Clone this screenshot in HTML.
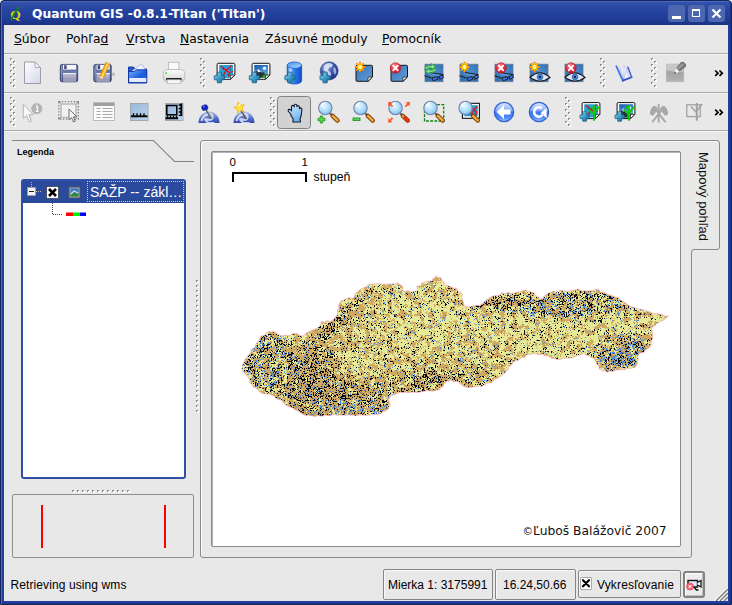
<!DOCTYPE html>
<html><head><meta charset="utf-8"><title>Quantum GIS</title>
<style>
html,body{margin:0;padding:0;}
body{width:732px;height:605px;overflow:hidden;background:#fff;position:relative;font-family:"DejaVu Sans","Liberation Sans",sans-serif;}
.abs,.a{position:absolute;}
#win{position:absolute;left:0;top:0;width:732px;height:605px;background:#223f9c;border-radius:4px 4px 0 0;box-sizing:border-box;border:1px solid #142560;box-shadow:inset 1px 1px 0 #4a66ba, inset -1px -1px 0 #1a3284;}
#client{position:absolute;left:4px;top:25px;width:724px;height:576px;background:#e8e8e8;}
#title{position:absolute;left:32px;top:7px;font:bold 12.3px "DejaVu Sans","Liberation Sans",sans-serif;color:#fff;white-space:nowrap;}
.menu{position:absolute;top:32px;font:12.3px "DejaVu Sans","Liberation Sans",sans-serif;color:#000;white-space:nowrap;}
.hl{position:absolute;left:4px;width:724px;height:1px;}
.ar{font-family:"Liberation Sans",sans-serif;white-space:nowrap;color:#000;}
.wb{position:absolute;top:5px;width:17px;height:17px;background:#4c67b0;border-radius:3px;}
.sbox{position:absolute;top:569px;height:31px;border:1px solid #858585;border-radius:2px;box-sizing:border-box;box-shadow:inset 1px 1px 0 #f8f8f8;}
.grip{position:absolute;width:3px;background-image:repeating-linear-gradient(#f8f8f8 0 1px,#a8a8a8 1px 2px,transparent 2px 4px);}
</style></head><body>
<div id="win"></div>
<div class="a" style="left:2px;top:2px;width:728px;height:23px;background:linear-gradient(#3453ab 0%,#26449f 35%,#213d98 70%,#1a3286 100%);"></div>
<div id="client"></div>
<!-- title bar -->
<svg class="a" style="left:8px;top:3px" width="16" height="20"><text x="2.200" y="16.300" font-family="Liberation Serif,serif" font-weight="bold" font-size="13.500" fill="#d8d410">Q</text><path d="M3 16.500L10.500 4.500" stroke="#108018" stroke-width="1.800"/><path d="M12 2.500l-0.300 4.500-3.200-2zM2.300 16.300l3-1 -1.500 2.500z" fill="#108018"/></svg>
<div id="title">Quantum GIS -0.8.1-Titan ('Titan')</div>
<div class="wb" style="left:668px"><div class="a" style="left:4px;top:11px;width:9px;height:2.500px;background:#fff"></div></div>
<div class="wb" style="left:688px"><div class="a" style="left:4px;top:3.500px;width:6px;height:5.500px;border:1.500px solid #fff;border-top-width:2.500px"></div></div>
<div class="wb" style="left:708px"><svg class="a" style="left:0;top:0" width="17" height="17"><path d="M4.5 4.5l8 8M12.5 4.5l-8 8" stroke="#fff" stroke-width="2.2"/></svg></div>
<!-- menu -->
<div class="menu" style="left:14px"><u>S</u>úbor</div>
<div class="menu" style="left:66px">Pohľa<u>d</u></div>
<div class="menu" style="left:126px"><u>V</u>rstva</div>
<div class="menu" style="left:180px"><u>N</u>astavenia</div>
<div class="menu" style="left:265px">Zásuvné <u>m</u>oduly</div>
<div class="menu" style="left:382px"><u>P</u>omocník</div>
<div class="hl" style="top:53px;background:#aaaaaa"></div>
<div class="hl" style="top:54px;background:#f6f6f6"></div>
<div class="hl" style="top:92px;background:#aaaaaa"></div>
<div class="hl" style="top:93px;background:#f6f6f6"></div>
<div class="hl" style="top:130px;background:#aaaaaa"></div>
<div class="hl" style="top:131px;background:#f6f6f6"></div>
<!-- TOOLBARS -->
<!--TB--><svg class="a" style="left:0;top:53px" width="732" height="80" viewBox="0 53 732 80">
<defs>
<linearGradient id="gPage" x1="0" y1="0" x2="1" y2="1"><stop offset="0" stop-color="#ffffff"/><stop offset="1" stop-color="#d4d8ea"/></linearGradient>
<linearGradient id="gFlop" x1="0" y1="0" x2="0" y2="1"><stop offset="0" stop-color="#4c5a94"/><stop offset="0.450" stop-color="#6c7cac"/><stop offset="1" stop-color="#2c3666"/></linearGradient>
<linearGradient id="gFold" x1="0" y1="0" x2="1" y2="1"><stop offset="0" stop-color="#78b8fc"/><stop offset="0.550" stop-color="#1c5cdc"/><stop offset="1" stop-color="#2c6ce4"/></linearGradient>
<linearGradient id="gPlus" x1="0" y1="0" x2="1" y2="1"><stop offset="0" stop-color="#a4dcf4"/><stop offset="0.500" stop-color="#3c9cc8"/><stop offset="1" stop-color="#146894"/></linearGradient>
<linearGradient id="gCyl" x1="0" y1="0" x2="1" y2="0"><stop offset="0" stop-color="#2470e4"/><stop offset="0.220" stop-color="#c4e4ff"/><stop offset="0.450" stop-color="#2c80ec"/><stop offset="1" stop-color="#0c50c8"/></linearGradient>
<radialGradient id="gGlobe" cx="0.35" cy="0.3" r="0.75"><stop offset="0" stop-color="#a8bce8"/><stop offset="0.450" stop-color="#4060b4"/><stop offset="1" stop-color="#1c2c84"/></radialGradient>
<radialGradient id="gSq" cx="0.55" cy="0.45" r="0.7"><stop offset="0" stop-color="#4c90d0"/><stop offset="1" stop-color="#2c6cb0"/></radialGradient>
<radialGradient id="gRed" cx="0.4" cy="0.3" r="0.8"><stop offset="0" stop-color="#ff9a9a"/><stop offset="0.5" stop-color="#e83040"/><stop offset="1" stop-color="#b01020"/></radialGradient>
<radialGradient id="gLens" cx="0.4" cy="0.35" r="0.7"><stop offset="0" stop-color="#ecf8ff"/><stop offset="0.600" stop-color="#a8dcf8"/><stop offset="1" stop-color="#7cc0ec"/></radialGradient>
<linearGradient id="gBtn" x1="0" y1="0" x2="0" y2="1"><stop offset="0" stop-color="#e0eaff"/><stop offset="0.420" stop-color="#86acf8"/><stop offset="0.500" stop-color="#3c74f4"/><stop offset="0.780" stop-color="#4c88fa"/><stop offset="1" stop-color="#a4c8ff"/></linearGradient>
<linearGradient id="gGrey" x1="0" y1="0" x2="0" y2="1"><stop offset="0" stop-color="#c4c4c4"/><stop offset="0.5" stop-color="#a4a4a4"/><stop offset="1" stop-color="#b4b4b4"/></linearGradient>
<linearGradient id="gMeas" x1="0" y1="0" x2="1" y2="1"><stop offset="0" stop-color="#98b8dc"/><stop offset="1" stop-color="#bcd4ec"/></linearGradient>
<linearGradient id="gDome" x1="0" y1="0" x2="0" y2="1"><stop offset="0" stop-color="#b4c4ec"/><stop offset="0.600" stop-color="#5470c8"/><stop offset="1" stop-color="#3448a8"/></linearGradient>
<linearGradient id="gHandle" x1="0" y1="0" x2="1" y2="0"><stop offset="0" stop-color="#f8c060"/><stop offset="1" stop-color="#b86c10"/></linearGradient>
<linearGradient id="gHand" x1="0" y1="0" x2="0.300" y2="1"><stop offset="0" stop-color="#d4ecfc"/><stop offset="1" stop-color="#70b4ec"/></linearGradient>
<linearGradient id="gSky" x1="0" y1="0" x2="0.300" y2="1"><stop offset="0" stop-color="#1458b0"/><stop offset="1" stop-color="#6cb4f0"/></linearGradient>
<linearGradient id="gCylTop" x1="0" y1="0" x2="1" y2="1"><stop offset="0" stop-color="#4090f0"/><stop offset="1" stop-color="#b4dcff"/></linearGradient>
<linearGradient id="gBP" x1="0" y1="0" x2="1" y2="1"><stop offset="0" stop-color="#3874b8"/><stop offset="1" stop-color="#649cd8"/></linearGradient>
<g id="grip"><path d="M0 0h2v2h-2zM3 3h2v2h-2zM0 6h2v2h-2zM3 9h2v2h-2zM0 12h2v2h-2zM3 15h2v2h-2zM0 18h2v2h-2zM3 21h2v2h-2zM0 24h2v2h-2zM3 27h2v2h-2z" fill="#8c8c8c"/><path d="M1 1h2v2h-2zM4 4h2v2h-2zM1 7h2v2h-2zM4 10h2v2h-2zM1 13h2v2h-2zM4 16h2v2h-2zM1 19h2v2h-2zM4 22h2v2h-2zM1 25h2v2h-2zM4 28h2v2h-2z" fill="#ffffff"/></g>
<g id="plus"><path d="M3.400 0.500h3.400q0.500 0 0.500 0.500v2.900h2.400q0.500 0 0.500 0.500v3.200q0 0.500-0.500 0.500h-2.400v2.500q0 0.500-0.500 0.500h-3.400q-0.500 0-0.500-0.500v-2.500h-2.400q-0.500 0-0.500-0.500v-3.200q0-0.500 0.500-0.500h2.400v-2.900q0-0.500 0.500-0.500z" fill="url(#gPlus)" stroke="#185c84" stroke-width="0.800"/></g>
<g id="star"><path d="M-5.20 -0.00L5.20 0.00M-3.68 -3.68L3.68 3.68M-0.00 -5.20L0.00 5.20M3.68 -3.68L-3.68 3.68" stroke="#ff8800" stroke-width="1.900"/><path d="M-3.80 -0.00L3.80 0.00M-2.69 -2.69L2.69 2.69M-0.00 -3.80L0.00 3.80M2.69 -2.69L-2.69 2.69" stroke="#ffd400" stroke-width="1.200"/><circle r="1.900" fill="#fff4a0"/></g>
<g id="redx"><circle r="5.300" fill="url(#gRed)" stroke="#b02030" stroke-width="0.6"/><path d="M-2.300 -2.300l4.600 4.600M2.300 -2.300l-4.600 4.600" stroke="#fff" stroke-width="1.800" stroke-linecap="round"/></g>
<g id="pagev"><path d="M0 0h18v12.500l-3.500 3.500h-14.500z" fill="#fff" stroke="#111" stroke-width="1.100"/><path d="M18 12.500h-3.500v3.500z" fill="#ddd" stroke="#111" stroke-width="0.700"/></g>
<g id="lens"><path d="M4 4.500l4 4" stroke="#5a5a6a" stroke-width="2"/><path d="M7.300 7.800l5 4.800" stroke="#7a4810" stroke-width="4.400" stroke-linecap="round"/><path d="M7.600 8.100l4.500 4.300" stroke="#f0a840" stroke-width="2.500" stroke-linecap="round"/><circle r="6.700" fill="url(#gLens)" stroke="#7882b0" stroke-width="1.100"/><path d="M-4.200 -1.300a4.500 4.500 0 0 1 3.700 -3.700" stroke="#fff" stroke-width="1.400" fill="none" opacity="0.950"/></g>
<g id="sqglass"><rect x="0" y="0" width="18" height="17.500" fill="url(#gSq)" stroke="#6c7c98" stroke-width="0.800"/><path d="M4.500 8.500l13.500 2v1.500l-13.500-2z" fill="#6ca4e0" opacity="0.800"/><path d="M-0.500 11.500l7 2.300M5 8.300l13.500 2.200M12.300 13.300l1.900-0.600" stroke="#181818" stroke-width="1" fill="none"/><path d="M7 13.700l5-1.200 0.700 2.600-4.500 1.500zM14 12.200l3.800-1.500 0.600 2.700-3.600 1.700z" fill="#4070f8" stroke="#181818" stroke-width="0.900"/></g>
<g id="sqeye"><rect x="0" y="0" width="18" height="17.500" fill="url(#gSq)" stroke="#6c7c98" stroke-width="0.800"/><path d="M0 13q10 -9 20 0.300q-10 7.500 -20 -0.300z" fill="#dce6f4" stroke="#1c1c24" stroke-width="1.200"/><circle cx="10" cy="12.700" r="2.900" fill="#4c88d8" stroke="#2c58a8" stroke-width="0.700"/><circle cx="10" cy="12.700" r="1.100" fill="#10183c"/></g>
<g id="star5"><path d="M-1.43 -5.62L1.00 -2.51L4.90 -3.10L2.69 0.17L4.46 3.70L0.67 2.62L-2.14 5.39L-2.28 1.44L-5.79 -0.37L-2.08 -1.72z" fill="#ffe23c" stroke="#f0b428" stroke-width="0.800" stroke-linejoin="round"/><path d="M-2 -1.500l2-2.500 1 2z" fill="#fff8c0"/></g>
<g id="chev"><path d="M0.500 0l2.800 2.700-2.800 2.700M4.800 0l2.800 2.700-2.800 2.700" stroke="#000" stroke-width="1.700" fill="none"/></g>
</defs>
<!-- ===== toolbar 1 ===== -->
<use href="#grip" x="10" y="58"/>
<use href="#grip" x="200" y="58"/>
<use href="#grip" x="600" y="58"/>
<use href="#grip" x="651" y="58"/>
<!-- new -->
<path d="M24.500 62h10.500l5.500 5.500v16h-16z" fill="url(#gPage)" stroke="#9c9cac" stroke-width="1"/><path d="M35 62v5.500h5.500z" fill="#f4f4f8" stroke="#9c9cac" stroke-width="0.800"/>
<!-- save -->
<g id="flop"><rect x="60.300" y="64.400" width="17.400" height="17.400" rx="1.800" fill="url(#gFlop)" stroke="#283060" stroke-width="0.800"/><rect x="61" y="65" width="1.200" height="16" fill="#98a4cc" opacity="0.700"/><rect x="63" y="64.800" width="13.200" height="4.800" fill="#f4f4fa"/><rect x="64.200" y="65.200" width="2.400" height="3.800" fill="#3c4878"/><rect x="63" y="73" width="13.200" height="8.600" fill="#b0b0cc"/><rect x="63" y="73" width="13.200" height="1.200" fill="#ececf6"/><rect x="63" y="77.500" width="13.200" height="4" fill="#9c9cbc"/></g>
<use href="#flop" x="33.500" y="0"/>
<path d="M105.800 62.300l4 1.500-6 13.700-4-1.500z" fill="#f8a818" stroke="#d08008" stroke-width="0.500"/><path d="M99.800 76l4 1.500-3.600 2.400z" fill="#f4d8a8"/><path d="M107.300 62.900l1.500 0.600-6 13.700-1.500-0.600z" fill="#ffd868"/><path d="M100.600 78.600l0.900 0.400-1.300 0.900z" fill="#806040"/>
<rect x="112" y="72.500" width="3" height="3.500" fill="#c0c0c4" rx="1"/>
<!-- open -->
<path d="M128.500 67h5l1.500 2h11.500v13.800h-18z" fill="#2458d0" stroke="#1030a0" stroke-width="0.900"/>
<path d="M130.500 72l11-8 3.800 5.500v5h-14.800z" fill="#f0f2fc" stroke="#98a4cc" stroke-width="0.600"/>
<path d="M128.500 82.800v-11.300h5.500l2-1.700h10.800v13z" fill="url(#gFold)" stroke="#1030a0" stroke-width="0.900"/>
<path d="M129.300 78h17v4h-17z" fill="#e8ecfc"/>
<!-- print -->
<defs><linearGradient id="gPrn" x1="0" y1="0" x2="0" y2="1"><stop offset="0" stop-color="#fbfbfb"/><stop offset="0.600" stop-color="#e4e4e4"/><stop offset="1" stop-color="#c4c4c4"/></linearGradient></defs>
<rect x="168.500" y="62.300" width="10.300" height="8" fill="#fafafa" stroke="#b4b4b4" stroke-width="0.800"/>
<rect x="163.300" y="69.500" width="21.500" height="12.500" rx="4.200" fill="url(#gPrn)" stroke="#b0b0b0" stroke-width="0.800"/>
<rect x="166" y="78" width="15.700" height="2" rx="0.800" fill="#202020"/>
<rect x="167.500" y="79.800" width="13" height="3.800" fill="#f6f6f6" stroke="#b8b8b8" stroke-width="0.700"/>
<circle cx="166.200" cy="73" r="0.900" fill="#50d050"/>
<!-- add vector -->
<g id="vecpage"><path d="M218.300 63.300h15.400q1.200 0 1.200 1.200v10.500l-4.200 4.300h-12.400q-1.200 0-1.200-1.200v-13.600q0-1.200 1.200-1.200z" fill="#fff" stroke="#111" stroke-width="1"/><path d="M219.200 65h13.800v9.300l-3.700 3.800h-10.100z" fill="#28a0d8"/><path d="M221 66l5 4.500 5.500-5M226 70.500l3.500 2-1 4M226 70.500l-2.500 4.500 0.500 2.500M229.500 72.500l3.500-1" stroke="#e01018" stroke-width="1.300" fill="none"/><path d="M223 68.500h1v1h-1zM230 69h1v1h-1zM227.500 74h1v1h-1z" fill="#103048"/><path d="M234.700 75l-4.200 0.200-0.100 4z" fill="#fff" stroke="#111" stroke-width="0.700"/></g>
<use href="#plus" x="214.300" y="71.700"/>
<!-- add raster -->
<g id="raspage"><path d="M253.300 63.300h15.400q1.200 0 1.200 1.200v10.500l-4.200 4.300h-12.400q-1.200 0-1.200-1.200v-13.600q0-1.200 1.200-1.200z" fill="#fff" stroke="#111" stroke-width="1"/><path d="M254.200 65h13.800v9.300l-3.700 3.800h-10.100z" fill="url(#gSky)"/><circle cx="264.500" cy="68.300" r="1.700" fill="#e8f4ff"/><path d="M254.200 78.100v-4l4.300-5 3.500 4 1.500-1 2.500 3-1.700 3z" fill="#283038"/><path d="M257 70.800l1.500-1.800 2.600 3-1.600-0.300-0.800 0.800z" fill="#fff"/><path d="M261 78.100l2.500-3.300 4.500-1v0.500l-3.700 3.800z" fill="#28a028"/><path d="M269.700 75l-4.200 0.200-0.100 4z" fill="#fff" stroke="#111" stroke-width="0.700"/></g>
<use href="#plus" x="249.300" y="71.700"/>
<!-- postgis -->
<path d="M287.200 65.200v15.600a7.200 3.200 0 0 0 14.400 0v-15.600z" fill="url(#gCyl)" stroke="#0c48c0" stroke-width="0.800"/><ellipse cx="294.400" cy="65.200" rx="7.200" ry="3.200" fill="url(#gCylTop)" stroke="#1458d0" stroke-width="0.800"/>
<use href="#plus" x="284.800" y="71.700"/>
<!-- wms globe -->
<circle cx="329.200" cy="70.800" r="9" fill="url(#gGlobe)" stroke="#283880" stroke-width="0.600"/><path d="M324 66q2-3 6-3l3 1.500-1 2.500-3 0.500-1 3 2.500 1.500 0.500 3.500-2 1-2.500-4-3-2z" fill="#e8eef8" opacity="0.800"/><path d="M333.500 67l2 1 1 4-1.500 3-1.500-3z" fill="#dfe6f4" opacity="0.650"/>
<use href="#plus" x="320" y="71.700"/>
<!-- new vector layer -->
<g id="bluepage"><path d="M357 65.300h14.500q1 0 1 1v10.700l-4.300 4.300h-11.200q-1 0-1-1v-14q0-1 1-1z" fill="url(#gBP)" stroke="#181818" stroke-width="1"/><path d="M372.300 77l-4.300 0.200-0.100 4z" fill="#f8f8f8" stroke="#181818" stroke-width="0.700"/></g>
<use href="#star" x="360" y="67"/>
<!-- remove layer -->
<use href="#bluepage" x="35" y="0"/><use href="#redx" x="395.500" y="68"/>
<!-- overview icons -->
<use href="#sqglass" x="425" y="64.200"/>
<path d="M424.500 69.500q0.500-4 5-4h2v-2l4 3.200-4 3.200v-2h-2q-2.500 0-2.800 1.600zM436.500 68.500q-0.500 4-5 4h-2v2l-4-3.200 4-3.200v2h2q2.500 0 2.800-1.600z" fill="#84e484" stroke="#2c9444" stroke-width="0.800"/>
<use href="#sqglass" x="460" y="64.200"/><use href="#star" x="464.500" y="67"/>
<use href="#sqglass" x="495" y="64.200"/><use href="#redx" x="501" y="68"/>
<use href="#sqeye" x="530" y="64.200"/><use href="#star" x="534.500" y="67"/>
<use href="#sqeye" x="565" y="64.200"/><use href="#redx" x="571" y="68"/>
<!-- help book -->
<path d="M617 67l3.500 1.500 3.700-3.800 3.500 2.800 3.700 9.700-8.400 3.200z" fill="#dcdcf6"/>
<path d="M621 70l3-4.500 2 3.500 1.500 8-4 2.500z" fill="#f6f6ff"/>
<path d="M624.200 65.500l-0.700 14M620.500 69l3 10.500M627.200 68l-3.500 11.500" stroke="#a4a8dc" stroke-width="0.600" fill="none"/>
<path d="M616.300 66.200l6.500 14.400" stroke="#4478e4" stroke-width="1.800" stroke-linecap="round"/>
<path d="M622.800 80.600l8.900-3.300" stroke="#2c50c4" stroke-width="1.700" stroke-linecap="round"/>
<path d="M627.900 67.300l3.800 10" stroke="#4468cc" stroke-width="1.500" stroke-linecap="round"/>
<!-- toggle edit (grey) -->
<rect x="666.200" y="64" width="17.600" height="17.800" fill="url(#gGrey)" stroke="#b8b8b8" stroke-width="0.600"/>
<path d="M666.500 64.300h17v7.500q-8 0.500-17-1.500z" fill="#cacaca" opacity="0.800"/>
<path d="M683.500 61.800l2.700 2.700-0.300 2.200-6.400 5-3.500-3.500 5-6.200z" fill="#787878"/><path d="M682.300 63.200l1.500 1.500-6 5.500-1.300-1.300z" fill="#9c9c9c"/>
<path d="M676 68.200l3.500 3.500-3.200 1.300-1.600-1.600z" fill="#f4f4f4"/><path d="M674.700 71.400l1.600 1.600-2.300 0.800z" fill="#606060"/>
<use href="#chev" x="714.700" y="70.500"/>
<!-- ===== toolbar 2 ===== -->
<use href="#grip" x="10" y="97"/>
<use href="#grip" x="270" y="97"/>
<use href="#grip" x="565" y="97"/>
<!-- identify -->
<path d="M23.300 104.300v14.200l3.300-3 2.700 6.500 2.300-1-2.700-6.300h4.300z" fill="#f8f8f8" stroke="#b4b4b4" stroke-width="1"/>
<circle cx="36.800" cy="108.600" r="5.200" fill="#b4b4b4" stroke="#a0a0a0" stroke-width="0.500"/><path d="M36.200 107.500h1.300v3.600M35.800 111.300h2.600" stroke="#fff" stroke-width="1.200" fill="none"/><circle cx="36.900" cy="105.800" r="0.900" fill="#fff"/>
<!-- select -->
<rect x="61" y="104" width="15" height="13.500" fill="#f2f2f2" stroke="#bcbcbc" stroke-width="1.600"/>
<rect x="58.800" y="101.600" width="19.500" height="17.500" fill="none" stroke="#808080" stroke-width="1.300" stroke-dasharray="1.300 1.700"/><path d="M58 101h2.500v2h-2.500zM76.500 101h2.500v2h-2.500zM58 117.500h2.500v2h-2.500z" fill="#909090"/>
<path d="M69 109v11l2.500-2.300 2 4.300 1.800-.8-2-4.300h3.500z" fill="#f4f4f4" stroke="#707070" stroke-width="1"/>
<!-- attribute table -->
<rect x="93.500" y="102.500" width="21" height="18" fill="#fcfcfc" stroke="#b4b4b4" stroke-width="0.900"/><rect x="94" y="103" width="20" height="3" fill="#a0a0a0"/>
<path d="M96.500 108.500h4M102.500 108.500h10M96.500 111.500h4M102.500 111.500h10M96.500 114.500h4M102.500 114.500h10M96.500 117.500h4M102.500 117.500h10" stroke="#a8a8a8" stroke-width="1.100"/>
<!-- measure line -->
<rect x="130.500" y="103.500" width="17.500" height="17" fill="url(#gMeas)" stroke="#9ca4ac" stroke-width="0.900"/>
<path d="M131 116.300h16.500" stroke="#000" stroke-width="1.900"/><path d="M133.500 116v-2.800M137 116v-2.800M140.500 116v-2.800M144 116v-2.800" stroke="#000" stroke-width="1.300"/>
<!-- measure area -->
<rect x="165.500" y="103.500" width="17.500" height="17" fill="url(#gMeas)" stroke="#9ca4ac" stroke-width="0.900"/>
<rect x="166.800" y="105.500" width="10" height="9.300" fill="none" stroke="#000" stroke-width="1.500"/>
<path d="M165.500 118.300h12.500M181.300 103.500v12.500" stroke="#000" stroke-width="1.900" fill="none"/><path d="M167.500 118v-2.300M170.500 118v-2.300M173.500 118v-2.300M176.500 118v-2.300M181 105h-2.300M181 108.500h-2.300M181 112h-2.300M181 115.300h-2.300" stroke="#000" stroke-width="1.300" fill="none"/>
<!-- bookmarks -->
<g id="dome"><path d="M198.500 123a10.500 11.500 0 0 1 21 0z" fill="url(#gDome)"/><path d="M201.500 121q1-5 6-6.500t5 2.500-5 2.500 1 3.500h6" stroke="#e8eefc" stroke-width="2.200" fill="none" opacity="0.800"/></g>
<path d="M206 109.500l5.500 9" stroke="#555" stroke-width="1.600"/><path d="M206.700 109.500l5.300 8.600" stroke="#ddd" stroke-width="0.600"/><rect x="201.800" y="105" width="6" height="5.200" rx="2" fill="#1424c4" stroke="#0c1470" stroke-width="0.500" transform="rotate(-15 204.800 107.600)"/><circle cx="203.800" cy="106.600" r="1" fill="#6c7cf0"/>
<use href="#dome" x="35" y="0"/>
<path d="M240.500 109.500l6 9.500" stroke="#444" stroke-width="1.600"/><path d="M241.200 109.500l5.800 9.100" stroke="#ddd" stroke-width="0.600"/><use href="#star5" x="239.500" y="107.800"/>
<!-- pan (pressed) -->
<rect x="277.500" y="96.500" width="33" height="32" rx="3" fill="#d2d2d2" stroke="#828282" stroke-width="1"/>
<path d="M291 114.500l-2.500-3q-1-2 .8-2.200 1.200 0 2.200 1.500v-4q.2-1.600 1.500-1.400 1.200.2 1.200 1.500v-1.500q.3-1.300 1.500-1.200 1.200.2 1.200 1.500v1q.4-1.200 1.500-1 1.200.3 1.100 1.500v1.500q.5-1 1.500-.7 1 .4.900 1.600l-.6 5.200q-.3 2-1.200 3.500l.3 3.700h-7.500l.3-3.200q-1.300-1.500-2.200-2.800z" fill="url(#gHand)" stroke="#101828" stroke-width="1.100" stroke-linejoin="round"/>
<!-- zoom in -->
<use href="#lens" x="325.300" y="108"/>
<path d="M320.300 116h2.400v2.300h2.300v2.400h-2.300v2.300h-2.400v-2.300h-2.300v-2.400h2.300z" fill="#58d858" stroke="#189018" stroke-width="0.800"/>
<!-- zoom out -->
<use href="#lens" x="360.500" y="108"/>
<rect x="353" y="118" width="7" height="2.600" fill="#58d858" stroke="#189018" stroke-width="0.800"/>
<!-- zoom full -->
<use href="#lens" x="395.500" y="108"/>
<path d="M405 117.500l3.300 3.200" stroke="#e83010" stroke-width="3.200" stroke-linecap="round"/>
<path d="M388.500 102v4l1.200-1.200 2.300 2.300 1-1-2.300-2.300 1.200-1.200zM409.500 102v4l-1.200-1.200-2.300 2.300-1-1 2.300-2.300-1.200-1.200zM388.500 122.500v-4l1.200 1.200 2.300-2.300 1 1-2.300 2.300 1.200 1.200z" fill="#ff5020" stroke="#ff5020" stroke-width="0.400"/>
<!-- zoom selection -->
<rect x="424.500" y="104.700" width="19.200" height="16.300" fill="none" stroke="#0c8010" stroke-width="1.300" stroke-dasharray="2.800 1.400"/>
<use href="#lens" x="430.500" y="108"/>
<!-- zoom layer -->
<rect x="462.400" y="103.300" width="17" height="15" fill="#fff" stroke="#111" stroke-width="1.100"/><rect x="464.300" y="105.200" width="13.400" height="11" fill="#2898d0"/><path d="M470 106l4 4 3.500-3.500M474 110l2.500 2-1 3.500M474 110l-2.500 4" stroke="#e01020" stroke-width="1.400" fill="none"/>
<use href="#lens" x="465.600" y="108" transform="translate(0 0)"/>
<!-- zoom last -->
<circle cx="504" cy="112" r="9.600" fill="url(#gBtn)" stroke="#3464d4" stroke-width="1.400"/><path d="M496.500 112l7.500-7v4.500h6.500v5h-6.500v4.500z" fill="#fff"/>
<!-- refresh -->
<circle cx="539" cy="112" r="9.600" fill="url(#gBtn)" stroke="#3464d4" stroke-width="1.400"/><path d="M541.8 108.4A4.7 4.7 0 1 0 542.4 115.0" stroke="#fff" stroke-width="2.600" fill="none"/><path d="M540.500 113l6-5 0.300 10.300z" fill="#fff"/>
<!-- grass vector -->
<g transform="translate(365 39.300)"><use href="#vecpage"/></g>
<g transform="translate(580 111.300) scale(0.900)"><use href="#plus"/></g>
<path d="M594 120.800v-15.800M594 114.800l-5.500-5.500M594.300 112.500l5.300-6M594 110l-3-3.500" stroke="#10c810" stroke-width="1.900" fill="none"/>
<!-- grass raster -->
<g transform="translate(365 39.300)"><use href="#raspage"/></g>
<g transform="translate(615 111.300) scale(0.900)"><use href="#plus"/></g>
<path d="M629 120.800v-15.800M629 114.800l-5.500-5.500M629.300 112.500l5.300-6M629 110l-3-3.500" stroke="#10c810" stroke-width="1.900" fill="none"/>
<!-- grass tools grey -->
<path d="M658.700 104v18.400M652.300 122.200l12-15.500M665.500 122.200l-12-15.500" stroke="#a8a8a8" stroke-width="1.900" fill="none"/><path d="M650 114.500q-0.500-5 3.500-8.500l2.800 0.300 1.800 3-5 6.500zM668 114.500q0.500-5-3.500-8.500l-2.800 0.300-1.800 3 5 6.500z" fill="#a8a8a8"/>
<!-- edit region grey -->
<rect x="686.800" y="104.800" width="13.500" height="11.800" fill="none" stroke="#a2a2a2" stroke-width="1.300"/><path d="M696.800 103v17.700" stroke="#a2a2a2" stroke-width="2"/><path d="M691 106.500l5.500 6M697 110.500l5.300-6.500" stroke="#a2a2a2" stroke-width="1.400"/>
<use href="#chev" x="714.700" y="109.700"/>
</svg>
<!--/TB-->
<!-- legend dock -->
<svg class="a" style="left:0;top:135px" width="200" height="40"><path d="M12 5.500H153.500L174.500 26.500H194" fill="none" stroke="#868686" stroke-width="1.100"/></svg>
<div class="a ar" style="left:17px;top:147px;font-size:9px;font-weight:bold;">Legenda</div>
<div class="a" style="left:21px;top:179px;width:165px;height:300px;box-sizing:border-box;border:2px solid #3050a4;border-radius:3px;background:#fff;"></div>
<div class="a" style="left:23px;top:181px;width:161px;height:22px;background:#2a4a9e;"></div>
<div class="a" style="left:87px;top:181px;width:97px;height:21px;box-sizing:border-box;border:1px dotted #e0d090;"></div>
<div class="a ar" style="left:90px;top:184px;font-size:14px;color:#fff;">SAŽP -- zákl…</div>
<svg class="a" style="left:21px;top:179px" width="70" height="40">
<path d="M10.5 3v6M15 12.5h5" stroke="#c8c090" stroke-width="1" stroke-dasharray="1 1" fill="none"/>
<rect x="6.5" y="8.5" width="8" height="8" fill="#f4f4f4" stroke="#9a9a9a"/><path d="M8 12.5h5" stroke="#222" stroke-width="1"/>
<rect x="25.5" y="7.5" width="12" height="12" fill="#fff" stroke="#222" stroke-width="0.6"/><path d="M28 10l7 7M35 10l-7 7" stroke="#000" stroke-width="2.6"/>
<rect x="48" y="8" width="11" height="11" fill="#9aa0a8" stroke="#555" stroke-width="0.8"/><rect x="49.5" y="9.5" width="8" height="4.5" fill="#3a78c8"/><rect x="49.5" y="14" width="8" height="3.5" fill="#2c8a3c"/><path d="M50 15l3-3 4 2" stroke="#dde" stroke-width="1.2" fill="none"/>
<path d="M31.5 24v11.5h10" stroke="#444" stroke-width="1" stroke-dasharray="1 1" fill="none"/>
<rect x="45" y="33.500" width="7" height="3.500" fill="#f00"/><rect x="52" y="33.500" width="7" height="3.500" fill="#0e0"/><rect x="59" y="33.500" width="6" height="3.500" fill="#00f"/>
</svg>
<!-- overview -->
<div class="a" style="left:12px;top:494px;width:182px;height:64px;box-sizing:border-box;border:1px solid #8e8e8e;border-radius:2px;"></div>
<div class="a" style="left:41px;top:505px;width:2px;height:43px;background:#f00"></div>
<div class="a" style="left:164px;top:505px;width:2px;height:43px;background:#f00"></div>
<!-- map frame -->
<svg class="a" style="left:196px;top:136px" width="532" height="426"><path d="M7 4.500H521q2.500 0 2.500 2.500V111q0 2.500-2.500 2.500H498q-2.500 0-2.500 2.500V419q0 2.500-2.500 2.500H7q-2.500 0-2.500-2.500V7q0-2.500 2.500-2.500z" fill="none" stroke="#8a8a8a" stroke-width="1"/><path d="M5.500 419V7.500q0-2 2-2H521" fill="none" stroke="#f8f8f8" stroke-width="1"/></svg>
<div class="a" style="left:211px;top:151px;width:470px;height:396px;box-sizing:border-box;border:1px solid #8a8a8a;border-radius:2px;background:#fff;box-shadow:inset 1px 1px 0 #b4b4b4;"></div>
<!--MAP--><svg class="a" style="left:212px;top:152px" width="468" height="395" viewBox="212 152 468 395">
<defs>
<clipPath id="sk"><path d="M242.5,368.0 242.7,365.6 243.9,363.2 245.0,360.5 247.3,357.0 247.8,356.3 251.0,353.0 252.1,349.5 255.5,347.3 256.0,344.5 258.8,341.6 260.3,338.0 262.0,336.0 264.0,335.9 265.4,334.6 267.0,333.0 269.1,331.6 271.0,332.6 272.0,332.0 273.5,331.7 276.9,333.6 278.0,334.5 280.7,335.7 282.8,336.2 284.5,335.5 287.1,335.7 290.0,335.5 293.0,334.0 296.9,333.9 298.1,335.0 302.0,336.5 305.6,334.8 307.3,333.0 309.5,332.0 312.0,330.6 314.1,329.9 317.0,328.5 318.9,327.3 320.8,325.2 322.0,322.0 324.9,323.0 326.4,320.9 328.0,321.5 330.5,322.3 332.3,321.0 333.0,320.5 335.2,317.5 337.1,316.0 338.0,313.5 337.8,310.0 339.5,309.7 339.0,306.0 339.0,305.1 340.8,301.8 342.0,301.0 343.2,301.1 346.2,298.9 347.0,299.5 348.8,298.1 350.5,298.4 351.5,298.5 353.6,298.8 353.8,298.0 355.0,296.0 355.5,293.8 357.2,292.5 358.0,292.5 358.9,290.9 361.6,289.0 363.0,288.5 363.7,288.2 366.2,287.3 368.5,285.0 372.6,284.4 374.7,284.4 378.0,284.0 381.7,284.4 384.8,284.6 388.0,284.5 392.2,284.2 394.2,284.4 397.5,283.5 398.4,284.2 401.6,285.9 402.0,287.0 402.4,287.3 402.5,290.2 403.0,291.5 404.2,292.1 408.0,291.1 410.0,292.5 412.5,292.1 414.8,291.5 416.5,291.5 418.0,290.2 417.4,286.8 419.5,286.0 421.4,285.9 421.9,283.6 424.0,282.5 426.9,281.7 429.0,281.4 432.0,281.5 432.5,280.7 433.2,279.2 434.5,278.5 435.8,276.9 436.0,278.1 436.5,277.0 437.7,277.2 440.6,278.0 441.5,279.5 441.6,281.2 443.6,282.2 444.0,285.0 446.5,285.6 450.7,286.9 452.8,288.0 456.2,288.7 457.5,291.4 460.5,292.5 462.1,295.0 461.2,296.9 462.5,300.5 462.9,302.1 463.9,306.0 463.5,307.5 465.6,306.6 469.9,307.2 472.0,306.5 475.4,306.0 476.4,305.7 480.0,306.0 483.4,303.3 485.0,301.5 488.0,299.5 490.1,298.1 493.7,296.3 495.0,296.0 496.1,296.1 500.6,295.2 502.0,293.0 504.5,294.2 508.4,292.7 510.0,293.5 513.9,293.8 517.1,292.5 520.0,292.0 522.3,291.5 525.0,290.6 528.5,291.5 530.9,292.3 533.6,293.1 535.0,295.5 538.0,297.3 540.0,299.1 541.0,299.5 544.0,298.2 543.8,297.1 547.0,295.0 548.4,293.4 551.7,292.7 553.5,291.5 556.5,292.4 560.1,290.8 563.0,291.0 566.6,291.5 571.3,291.0 575.5,290.0 578.3,289.6 581.9,291.4 585.0,291.0 587.4,291.4 592.3,291.1 594.5,290.0 598.1,289.7 600.5,292.5 603.0,292.5 604.9,293.1 608.4,294.9 612.0,296.0 614.5,297.4 618.0,297.8 620.0,300.5 620.9,300.8 623.1,301.8 626.0,304.0 628.8,305.9 628.3,306.0 631.0,307.0 633.6,307.4 636.6,309.0 640.0,309.5 643.5,310.2 645.9,311.1 650.0,312.5 652.4,313.5 657.2,313.9 660.0,315.0 661.5,314.7 664.7,316.3 667.5,316.5 665.7,317.7 663.2,319.8 660.0,321.0 656.8,322.9 654.0,325.8 651.0,327.5 651.3,330.5 651.9,331.9 652.5,335.0 652.1,338.8 650.5,341.5 651.0,345.0 648.8,347.6 648.0,348.0 645.0,350.0 643.8,352.0 640.1,352.6 638.5,354.0 637.1,357.1 637.9,359.6 637.0,361.0 637.0,363.4 636.2,365.2 635.0,367.0 630.4,368.0 626.5,367.8 624.0,369.5 620.7,369.1 615.0,369.9 612.0,371.5 610.9,370.4 606.9,371.7 606.0,370.5 602.9,370.7 602.1,370.0 599.5,368.5 599.8,367.2 598.6,364.4 597.0,364.0 596.3,361.9 594.8,358.7 593.0,357.5 591.9,357.5 588.6,355.1 588.0,354.5 586.5,355.0 584.0,353.1 583.0,353.5 580.4,354.4 579.6,354.6 577.0,355.5 575.2,355.9 573.6,356.6 572.5,357.5 569.0,357.7 568.6,357.6 565.0,358.0 562.9,357.5 560.1,359.3 557.0,359.0 555.1,358.4 552.3,358.0 550.0,357.0 549.0,355.2 545.0,355.6 544.0,354.0 542.3,353.9 538.5,354.2 536.0,353.5 532.7,353.1 530.3,354.0 528.5,354.0 525.9,354.4 524.6,357.1 522.0,357.0 519.5,358.7 517.8,360.2 516.0,360.5 514.9,360.9 512.7,361.4 512.0,363.5 510.6,365.1 508.5,366.8 508.0,369.0 506.4,370.8 504.8,372.5 504.5,372.5 503.0,373.9 501.4,375.6 500.0,376.0 498.9,377.1 496.3,378.5 494.5,379.0 493.5,379.9 491.4,382.4 489.0,382.5 486.9,382.7 484.4,384.7 483.0,385.0 481.1,386.6 479.2,385.4 476.0,386.5 473.3,386.1 471.2,387.3 470.0,387.0 468.2,387.1 464.1,386.2 462.0,384.5 459.7,383.1 458.9,381.2 456.5,381.0 453.4,381.3 451.7,379.7 450.0,379.5 448.9,380.8 446.1,380.8 446.0,382.0 444.8,383.0 443.3,384.2 443.0,385.0 442.9,386.1 440.8,386.8 439.5,389.0 435.8,389.9 432.2,390.9 430.0,390.5 427.6,389.9 424.4,390.9 420.0,391.5 418.0,392.1 414.2,391.9 412.0,391.5 410.0,392.2 406.8,392.1 405.0,391.5 403.8,392.4 400.4,391.6 398.0,393.0 395.8,393.1 394.2,394.4 391.5,394.5 390.5,395.2 389.5,397.8 388.0,399.0 387.6,401.6 389.0,401.4 389.0,404.0 389.9,404.5 388.3,407.2 388.5,408.0 387.6,409.1 386.5,409.9 385.0,411.0 382.9,411.1 380.6,413.2 380.0,413.5 376.6,414.1 372.6,414.2 368.0,415.0 363.3,414.9 360.6,414.2 355.5,415.5 352.0,414.7 349.1,414.8 345.0,415.0 340.9,414.4 337.8,415.0 334.0,414.0 329.6,415.5 325.1,414.8 322.0,416.0 317.5,414.9 315.7,416.2 311.5,415.5 308.2,414.4 306.3,415.4 304.0,414.5 302.1,413.6 298.9,410.7 296.0,410.0 292.8,407.6 290.1,406.8 287.0,405.0 283.5,402.4 282.0,399.9 278.5,399.0 276.4,398.3 273.9,395.4 270.0,394.0 266.8,393.4 263.7,393.5 260.0,391.5 258.3,389.4 256.5,388.1 253.5,386.5 252.6,384.5 250.0,382.1 250.0,379.0 248.4,376.6 246.1,374.2 244.0,372.0 242.8,370.7 241.9,369.3z"/></clipPath>
<radialGradient id="b1"><stop offset="0" stop-color="#b8a094"/><stop offset="1" stop-color="#b8a094" stop-opacity="0"/></radialGradient>
<radialGradient id="b2"><stop offset="0" stop-color="#a090aa"/><stop offset="0.500" stop-color="#a090aa"/><stop offset="1" stop-color="#a090aa" stop-opacity="0"/></radialGradient>
<radialGradient id="b3"><stop offset="0" stop-color="#627c7c"/><stop offset="0.550" stop-color="#627c7c"/><stop offset="1" stop-color="#627c7c" stop-opacity="0"/></radialGradient>
<radialGradient id="b4"><stop offset="0" stop-color="#a0a884"/><stop offset="1" stop-color="#a0a884" stop-opacity="0"/></radialGradient>
<radialGradient id="b6"><stop offset="0" stop-color="#80929a"/><stop offset="0.600" stop-color="#80929a"/><stop offset="1" stop-color="#80929a" stop-opacity="0"/></radialGradient>
<radialGradient id="b5"><stop offset="0" stop-color="#a088a8"/><stop offset="1" stop-color="#a088a8" stop-opacity="0"/></radialGradient>
<filter id="fn" x="0" y="0" width="100%" height="100%" color-interpolation-filters="sRGB">
<feTurbulence type="fractalNoise" baseFrequency="0.700" numOctaves="2" seed="7"/>
<feColorMatrix type="matrix" values="1 0 0 0 0  0 1 0 0 0  0 0 1 0 0  0 0 0 0 1" result="n"/>
<feTurbulence type="fractalNoise" baseFrequency="0.170" numOctaves="3" seed="23"/>
<feColorMatrix type="matrix" values="1.500 0 0 0 -0.250  0 0.450 0 0 0.275  0 0 0.500 0 0.250  0 0 0 0 1" result="l"/>
<feComposite in="n" in2="l" operator="arithmetic" k1="0" k2="1" k3="1" k4="-0.500" result="m0"/>
<feComposite in="m0" in2="SourceGraphic" operator="arithmetic" k1="0" k2="1" k3="1" k4="-0.500" result="m"/>
<feColorMatrix in="m" type="matrix" values="0 0 0 0 0.810  0 0 0 0 0.660  0 0 0 0 0.380  40 0 0 0 -19.200" result="tan"/>
<feColorMatrix in="m" type="matrix" values="0 0 0 0 0.290  0 0 0 0 0.530  0 0 0 0 0.840  0 0 40 0 -28.300" result="blue"/>
<feColorMatrix in="m" type="matrix" values="0 0 0 0 0.030  0 0 0 0 0.030  0 0 0 0 0.040  0 40 0 0 -26.800" result="blk"/>
<feFlood flood-color="#e6ea96" result="y"/>
<feMerge><feMergeNode in="y"/><feMergeNode in="tan"/><feMergeNode in="blue"/><feMergeNode in="blk"/></feMerge>
</filter>
</defs>
<path d="M242.5,368.0 242.7,365.6 243.9,363.2 245.0,360.5 247.3,357.0 247.8,356.3 251.0,353.0 252.1,349.5 255.5,347.3 256.0,344.5 258.8,341.6 260.3,338.0 262.0,336.0 264.0,335.9 265.4,334.6 267.0,333.0 269.1,331.6 271.0,332.6 272.0,332.0 273.5,331.7 276.9,333.6 278.0,334.5 280.7,335.7 282.8,336.2 284.5,335.5 287.1,335.7 290.0,335.5 293.0,334.0 296.9,333.9 298.1,335.0 302.0,336.5 305.6,334.8 307.3,333.0 309.5,332.0 312.0,330.6 314.1,329.9 317.0,328.5 318.9,327.3 320.8,325.2 322.0,322.0 324.9,323.0 326.4,320.9 328.0,321.5 330.5,322.3 332.3,321.0 333.0,320.5 335.2,317.5 337.1,316.0 338.0,313.5 337.8,310.0 339.5,309.7 339.0,306.0 339.0,305.1 340.8,301.8 342.0,301.0 343.2,301.1 346.2,298.9 347.0,299.5 348.8,298.1 350.5,298.4 351.5,298.5 353.6,298.8 353.8,298.0 355.0,296.0 355.5,293.8 357.2,292.5 358.0,292.5 358.9,290.9 361.6,289.0 363.0,288.5 363.7,288.2 366.2,287.3 368.5,285.0 372.6,284.4 374.7,284.4 378.0,284.0 381.7,284.4 384.8,284.6 388.0,284.5 392.2,284.2 394.2,284.4 397.5,283.5 398.4,284.2 401.6,285.9 402.0,287.0 402.4,287.3 402.5,290.2 403.0,291.5 404.2,292.1 408.0,291.1 410.0,292.5 412.5,292.1 414.8,291.5 416.5,291.5 418.0,290.2 417.4,286.8 419.5,286.0 421.4,285.9 421.9,283.6 424.0,282.5 426.9,281.7 429.0,281.4 432.0,281.5 432.5,280.7 433.2,279.2 434.5,278.5 435.8,276.9 436.0,278.1 436.5,277.0 437.7,277.2 440.6,278.0 441.5,279.5 441.6,281.2 443.6,282.2 444.0,285.0 446.5,285.6 450.7,286.9 452.8,288.0 456.2,288.7 457.5,291.4 460.5,292.5 462.1,295.0 461.2,296.9 462.5,300.5 462.9,302.1 463.9,306.0 463.5,307.5 465.6,306.6 469.9,307.2 472.0,306.5 475.4,306.0 476.4,305.7 480.0,306.0 483.4,303.3 485.0,301.5 488.0,299.5 490.1,298.1 493.7,296.3 495.0,296.0 496.1,296.1 500.6,295.2 502.0,293.0 504.5,294.2 508.4,292.7 510.0,293.5 513.9,293.8 517.1,292.5 520.0,292.0 522.3,291.5 525.0,290.6 528.5,291.5 530.9,292.3 533.6,293.1 535.0,295.5 538.0,297.3 540.0,299.1 541.0,299.5 544.0,298.2 543.8,297.1 547.0,295.0 548.4,293.4 551.7,292.7 553.5,291.5 556.5,292.4 560.1,290.8 563.0,291.0 566.6,291.5 571.3,291.0 575.5,290.0 578.3,289.6 581.9,291.4 585.0,291.0 587.4,291.4 592.3,291.1 594.5,290.0 598.1,289.7 600.5,292.5 603.0,292.5 604.9,293.1 608.4,294.9 612.0,296.0 614.5,297.4 618.0,297.8 620.0,300.5 620.9,300.8 623.1,301.8 626.0,304.0 628.8,305.9 628.3,306.0 631.0,307.0 633.6,307.4 636.6,309.0 640.0,309.5 643.5,310.2 645.9,311.1 650.0,312.5 652.4,313.5 657.2,313.9 660.0,315.0 661.5,314.7 664.7,316.3 667.5,316.5 665.7,317.7 663.2,319.8 660.0,321.0 656.8,322.9 654.0,325.8 651.0,327.5 651.3,330.5 651.9,331.9 652.5,335.0 652.1,338.8 650.5,341.5 651.0,345.0 648.8,347.6 648.0,348.0 645.0,350.0 643.8,352.0 640.1,352.6 638.5,354.0 637.1,357.1 637.9,359.6 637.0,361.0 637.0,363.4 636.2,365.2 635.0,367.0 630.4,368.0 626.5,367.8 624.0,369.5 620.7,369.1 615.0,369.9 612.0,371.5 610.9,370.4 606.9,371.7 606.0,370.5 602.9,370.7 602.1,370.0 599.5,368.5 599.8,367.2 598.6,364.4 597.0,364.0 596.3,361.9 594.8,358.7 593.0,357.5 591.9,357.5 588.6,355.1 588.0,354.5 586.5,355.0 584.0,353.1 583.0,353.5 580.4,354.4 579.6,354.6 577.0,355.5 575.2,355.9 573.6,356.6 572.5,357.5 569.0,357.7 568.6,357.6 565.0,358.0 562.9,357.5 560.1,359.3 557.0,359.0 555.1,358.4 552.3,358.0 550.0,357.0 549.0,355.2 545.0,355.6 544.0,354.0 542.3,353.9 538.5,354.2 536.0,353.5 532.7,353.1 530.3,354.0 528.5,354.0 525.9,354.4 524.6,357.1 522.0,357.0 519.5,358.7 517.8,360.2 516.0,360.5 514.9,360.9 512.7,361.4 512.0,363.5 510.6,365.1 508.5,366.8 508.0,369.0 506.4,370.8 504.8,372.5 504.5,372.5 503.0,373.9 501.4,375.6 500.0,376.0 498.9,377.1 496.3,378.5 494.5,379.0 493.5,379.9 491.4,382.4 489.0,382.5 486.9,382.7 484.4,384.7 483.0,385.0 481.1,386.6 479.2,385.4 476.0,386.5 473.3,386.1 471.2,387.3 470.0,387.0 468.2,387.1 464.1,386.2 462.0,384.5 459.7,383.1 458.9,381.2 456.5,381.0 453.4,381.3 451.7,379.7 450.0,379.5 448.9,380.8 446.1,380.8 446.0,382.0 444.8,383.0 443.3,384.2 443.0,385.0 442.9,386.1 440.8,386.8 439.5,389.0 435.8,389.9 432.2,390.9 430.0,390.5 427.6,389.9 424.4,390.9 420.0,391.5 418.0,392.1 414.2,391.9 412.0,391.5 410.0,392.2 406.8,392.1 405.0,391.5 403.8,392.4 400.4,391.6 398.0,393.0 395.8,393.1 394.2,394.4 391.5,394.5 390.5,395.2 389.5,397.8 388.0,399.0 387.6,401.6 389.0,401.4 389.0,404.0 389.9,404.5 388.3,407.2 388.5,408.0 387.6,409.1 386.5,409.9 385.0,411.0 382.9,411.1 380.6,413.2 380.0,413.5 376.6,414.1 372.6,414.2 368.0,415.0 363.3,414.9 360.6,414.2 355.5,415.5 352.0,414.7 349.1,414.8 345.0,415.0 340.9,414.4 337.8,415.0 334.0,414.0 329.6,415.5 325.1,414.8 322.0,416.0 317.5,414.9 315.7,416.2 311.5,415.5 308.2,414.4 306.3,415.4 304.0,414.5 302.1,413.6 298.9,410.7 296.0,410.0 292.8,407.6 290.1,406.8 287.0,405.0 283.5,402.4 282.0,399.9 278.5,399.0 276.4,398.3 273.9,395.4 270.0,394.0 266.8,393.4 263.7,393.5 260.0,391.5 258.3,389.4 256.5,388.1 253.5,386.5 252.6,384.5 250.0,382.1 250.0,379.0 248.4,376.6 246.1,374.2 244.0,372.0 242.8,370.7 241.9,369.3z" fill="none" stroke="#f4b8c0" stroke-width="1.600"/>
<g clip-path="url(#sk)"><g filter="url(#fn)"><rect x="236" y="270" width="440" height="152" fill="#808080"/>
<ellipse cx="330" cy="398" rx="95" ry="38" fill="url(#b1)"/>
<ellipse cx="312" cy="372" rx="40" ry="42" fill="url(#b1)"/>
<ellipse cx="620" cy="352" rx="36" ry="28" fill="url(#b2)"/>
<ellipse cx="420" cy="322" rx="66" ry="42" fill="url(#b3)"/>
<ellipse cx="545" cy="326" rx="100" ry="42" fill="url(#b3)"/>
<ellipse cx="635" cy="318" rx="40" ry="18" fill="url(#b3)"/>
<ellipse cx="360" cy="362" rx="26" ry="18" fill="url(#b3)"/>
<ellipse cx="268" cy="362" rx="34" ry="34" fill="url(#b6)"/>
<ellipse cx="565" cy="304" rx="95" ry="16" fill="url(#b6)"/>
<ellipse cx="335" cy="325" rx="45" ry="10" fill="url(#b4)" transform="rotate(-42 335 325)"/>
<ellipse cx="490" cy="303" rx="40" ry="9" fill="url(#b4)"/>
<ellipse cx="440" cy="380" rx="60" ry="14" fill="url(#b4)"/>
<ellipse cx="345" cy="408" rx="60" ry="12" fill="url(#b5)"/>
</g></g>
</svg><!--/MAP-->
<!-- map decorations -->
<div class="a" style="left:232px;top:172px;width:75px;height:10px;box-sizing:border-box;border:2px solid #000;border-bottom:none;"></div>
<div class="a ar" style="left:229.500px;top:156px;font-size:11.500px;">0</div>
<div class="a ar" style="left:301.500px;top:156px;font-size:11.500px;">1</div>
<div class="a ar" style="left:313.500px;top:169.500px;font-size:12.300px;">stupeň</div>
<div class="a" style="left:522.500px;top:524px;font:12.300px 'DejaVu Sans','Liberation Sans',sans-serif;white-space:nowrap;color:#111;"><span style="font-size:10.500px;">©</span>Ľuboš Balážovič 2007</div>
<!-- map tab -->
<div class="a ar" style="left:711px;top:152px;font-size:13px;transform-origin:0 0;transform:rotate(90deg);color:#111;">Mapový pohľad</div>
<!-- splitters -->
<svg class="a" style="left:0;top:0" width="220" height="500"><path d="M72 490h2v2h-2zM77 490h2v2h-2zM82 490h2v2h-2zM87 490h2v2h-2zM92 490h2v2h-2zM97 490h2v2h-2zM102 490h2v2h-2zM107 490h2v2h-2zM112 490h2v2h-2zM117 490h2v2h-2zM122 490h2v2h-2zM127 490h2v2h-2zM196 280h2v2h-2zM196 285h2v2h-2zM196 290h2v2h-2zM196 295h2v2h-2zM196 300h2v2h-2zM196 305h2v2h-2zM196 310h2v2h-2zM196 315h2v2h-2zM196 320h2v2h-2zM196 325h2v2h-2zM196 330h2v2h-2zM196 335h2v2h-2zM196 340h2v2h-2zM196 345h2v2h-2zM196 350h2v2h-2zM196 355h2v2h-2zM196 360h2v2h-2zM196 365h2v2h-2zM196 370h2v2h-2zM196 375h2v2h-2zM196 380h2v2h-2zM196 385h2v2h-2zM196 390h2v2h-2zM196 395h2v2h-2zM196 400h2v2h-2zM196 405h2v2h-2zM196 410h2v2h-2z" fill="#8c8c8c"/><path d="M73 491h2v2h-2zM78 491h2v2h-2zM83 491h2v2h-2zM88 491h2v2h-2zM93 491h2v2h-2zM98 491h2v2h-2zM103 491h2v2h-2zM108 491h2v2h-2zM113 491h2v2h-2zM118 491h2v2h-2zM123 491h2v2h-2zM128 491h2v2h-2zM197 281h2v2h-2zM197 286h2v2h-2zM197 291h2v2h-2zM197 296h2v2h-2zM197 301h2v2h-2zM197 306h2v2h-2zM197 311h2v2h-2zM197 316h2v2h-2zM197 321h2v2h-2zM197 326h2v2h-2zM197 331h2v2h-2zM197 336h2v2h-2zM197 341h2v2h-2zM197 346h2v2h-2zM197 351h2v2h-2zM197 356h2v2h-2zM197 361h2v2h-2zM197 366h2v2h-2zM197 371h2v2h-2zM197 376h2v2h-2zM197 381h2v2h-2zM197 386h2v2h-2zM197 391h2v2h-2zM197 396h2v2h-2zM197 401h2v2h-2zM197 406h2v2h-2zM197 411h2v2h-2z" fill="#ffffff"/></svg>
<!-- status widgets -->
<div class="a" style="left:580px;top:577px;width:12px;height:12.500px;box-sizing:border-box;background:#fff;border:1px solid #a8a8a8;border-radius:1px;"></div>
<svg class="a" style="left:580px;top:577px" width="12" height="12"><path d="M3 3.200l6 6M9 3.200l-6 6" stroke="#000" stroke-width="2.300" stroke-linecap="round"/></svg>
<div class="a" style="left:683px;top:571px;width:22px;height:27px;box-sizing:border-box;border:2px solid #828282;border-radius:3px;background:#ececec;box-shadow:inset 1px 1px 0 #fff, inset -1px -1px 0 #c0c0c0;"></div>
<svg class="a" style="left:683px;top:571px" width="22" height="27"><rect x="5" y="9.500" width="9.500" height="6.500" fill="#d8e8f8" stroke="#111" stroke-width="1.400"/><path d="M14.500 11.500l3.500-2v6.500l-3.500-2" fill="#fff" stroke="#111" stroke-width="1.300"/><path d="M11 16l2.500 3h2" fill="none" stroke="#111" stroke-width="1.400"/><circle cx="7" cy="15.500" r="3.600" fill="#f06070" stroke="#e03848" stroke-width="0.500"/><path d="M5.600 14.100l2.800 2.800M8.400 14.100l-2.800 2.800" stroke="#ffe8e8" stroke-width="1.100"/></svg>
<svg class="a" style="left:713px;top:586px" width="15" height="15"><path d="M1.600 15L15 1.600M5.600 15L15 5.600M9.600 15L15 9.600" stroke="#ffffff" stroke-width="1.300"/><path d="M3 15L15 3M7 15L15 7M11 15L15 11" stroke="#787878" stroke-width="1.400"/></svg>
<!-- status bar -->
<div class="a ar" style="left:10.500px;top:578px;font-size:12px;letter-spacing:0.100px;">Retrieving using wms</div>
<div class="sbox" style="left:383px;width:110px"></div>
<div class="sbox" style="left:495px;width:81px"></div>
<div class="sbox" style="left:578px;width:103px;top:570px;height:28px"></div>
<div class="a ar" style="left:388px;top:578px;font-size:12px;">Mierka 1: 3175991</div>
<div class="a ar" style="left:503px;top:578px;font-size:12px;">16.24,50.66</div>
<div class="a ar" style="left:597px;top:578px;font-size:12px;letter-spacing:0.150px;">Vykresľovanie</div>
</body></html>
